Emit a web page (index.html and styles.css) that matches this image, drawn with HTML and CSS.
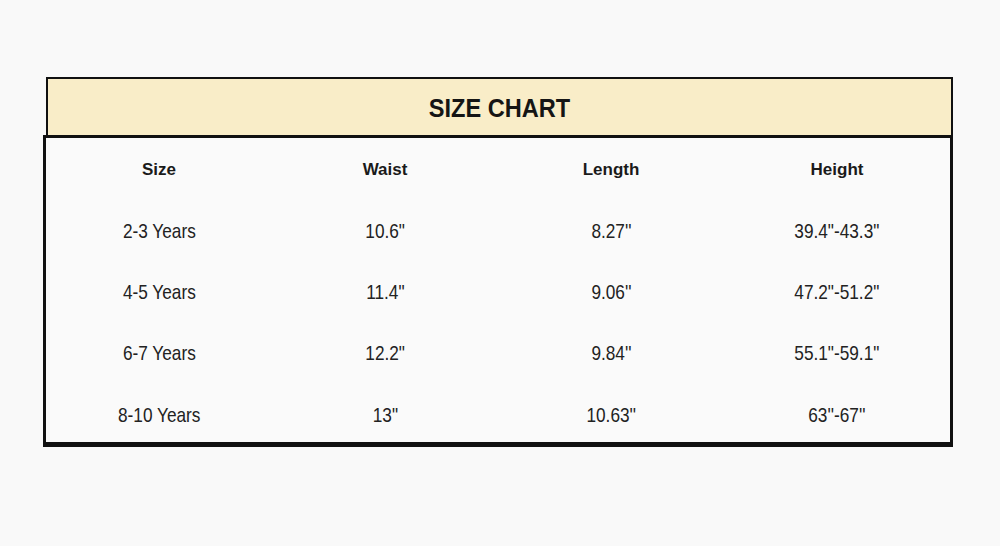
FILE: index.html
```html
<!DOCTYPE html>
<html>
<head>
<meta charset="utf-8">
<link rel="stylesheet" href="styles.css">
</head>
<body>
<div class="chart">
  <div class="chart-title"><span class="title-text">SIZE CHART</span></div>
  <div class="chart-table">
    <div class="cell head">Size</div>
    <div class="cell head">Waist</div>
    <div class="cell head">Length</div>
    <div class="cell head">Height</div>

    <div class="cell">2-3 Years</div>
    <div class="cell">10.6"</div>
    <div class="cell">8.27''</div>
    <div class="cell">39.4"-43.3"</div>

    <div class="cell">4-5 Years</div>
    <div class="cell">11.4"</div>
    <div class="cell">9.06''</div>
    <div class="cell">47.2"-51.2"</div>

    <div class="cell">6-7 Years</div>
    <div class="cell">12.2"</div>
    <div class="cell">9.84''</div>
    <div class="cell">55.1"-59.1"</div>

    <div class="cell">8-10 Years</div>
    <div class="cell">13"</div>
    <div class="cell">10.63''</div>
    <div class="cell">63''-67''</div>
  </div>
</div>
</body>
</html>
```

FILE: styles.css
```css
html, body {
  margin: 0;
  padding: 0;
}
body {
  background: #f9f9f9;
  width: 1000px;
  height: 546px;
  overflow: hidden;
  font-family: "Liberation Sans", Arial, sans-serif;
  color: #1c1c1c;
}
.chart {
  margin: 77px 0 0 43px;
  width: 910px;
}
.chart-title {
  margin-left: 3px;
  height: 56px;
  background: #f9edc8;
  border: 2px solid #111;
  border-bottom: none;
  display: flex;
  align-items: center;
  justify-content: center;
}
.title-text {
  display: inline-block;
  font-weight: bold;
  font-size: 26.5px;
  color: #151515;
  padding-top: 3px;
  transform: scaleX(0.89);
}
.chart-table {
  border: 3px solid #111;
  border-bottom-width: 5px;
  background: #fafafa;
  height: 302px;
  box-sizing: content-box;
  padding-top: 2px;
  display: grid;
  grid-template-columns: repeat(4, 1fr);
  grid-template-rows: 60px repeat(4, 61.4px);
  align-items: center;
  justify-items: center;
}
.cell {
  font-size: 21px;
  line-height: 24px;
  color: #222;
  transform: scaleX(0.82);
}
.cell.head {
  font-weight: bold;
  font-size: 17px;
  color: #1a1a1a;
  transform: none;
}
```
